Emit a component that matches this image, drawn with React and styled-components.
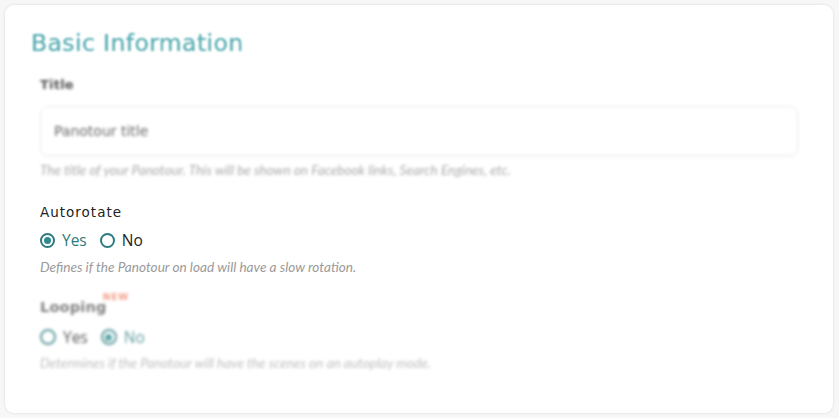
import React from "react";
import styled, { createGlobalStyle } from "styled-components";

const Global = createGlobalStyle`
  html, body { margin: 0; padding: 0; background: #f7f7f7; }
  * { box-sizing: border-box; }
`;

const Page = styled.div`
  width: 839px;
  height: 418px;
  padding: 5px 6px 5px 5px;
`;

const Card = styled.section`
  height: 408px;
  background: #fff;
  border-radius: 9px;
  box-shadow: 0 0 3px rgba(0, 0, 0, 0.12);
  padding: 24px 35px 0 26px;
  display: flex;
  flex-direction: column;
`;

const Heading = styled.h2`
  margin: 0;
  font-family: "DejaVu Sans", sans-serif;
  font-weight: 400;
  font-size: 23.5px;
  line-height: 28px;
  color: #5aaeb3;
  letter-spacing: 0.4px;
  filter: blur(1.3px);
  text-shadow: 0 0 0.6px #5aaeb3;
`;

const Body = styled.div`
  padding-left: 9px;
  display: flex;
  flex-direction: column;
`;

const Group = styled.div`
  display: flex;
  flex-direction: column;
  margin-top: ${(p) => p.$top}px;
  filter: ${(p) => (p.$blur ? "blur(1.4px)" : "none")};
  opacity: ${(p) => (p.$faded ? 0.75 : 1)};
`;

const Label = styled.div`
  position: relative;
  align-self: flex-start;
  font-family: "DejaVu Sans", sans-serif;
  font-size: ${(p) => p.$size}px;
  font-weight: ${(p) => (p.$bold ? 700 : 400)};
  letter-spacing: ${(p) => (p.$bold ? 0.2 : 1)}px;
  color: ${(p) => (p.$bold ? "#555" : "#222")};
  line-height: 18px;
`;

const NewBadge = styled.span`
  position: absolute;
  left: 100%;
  top: -10px;
  margin-left: -4px;
  font-family: "DejaVu Sans", sans-serif;
  font-weight: 700;
  font-size: 9px;
  color: #f07b5f;
  letter-spacing: 1px;
`;

const Input = styled.div`
  margin-top: 12px;
  height: 50px;
  border: 1px solid #ececec;
  border-radius: 8px;
  display: flex;
  align-items: center;
  padding-left: 13px;
  font-family: "DejaVu Sans", sans-serif;
  font-size: 14px;
  color: #666;
  box-shadow: 0 1px 2px rgba(0, 0, 0, 0.04);
`;

const Help = styled.div`
  margin-top: ${(p) => p.$top}px;
  font-family: Lato, "Liberation Sans", sans-serif;
  font-style: italic;
  font-size: 13.6px;
  color: ${(p) => p.$color || "#9a9a9a"};
  line-height: 16px;
`;

const Radios = styled.div`
  display: flex;
  align-items: center;
  gap: 13px;
  margin-top: ${(p) => p.$top}px;
`;

const Option = styled.label`
  display: flex;
  align-items: center;
  gap: 7px;
  font-family: "Open Sans", sans-serif;
  font-size: 15.5px;
  color: ${(p) => (p.$checked ? "#2d7b7e" : "#222")};
  line-height: 18px;
`;

const Circle = styled.span`
  width: ${(p) => p.$size}px;
  height: ${(p) => p.$size}px;
  border-radius: 50%;
  border: 2px solid #2d7b7e;
  display: flex;
  align-items: center;
  justify-content: center;
  &::after {
    content: "";
    width: 7px;
    height: 7px;
    border-radius: 50%;
    background: #2d8a8e;
    display: ${(p) => (p.$checked ? "block" : "none")};
  }
`;

const Radio = ({ checked, size = 15, children }) => (
  <Option $checked={checked}>
    <Circle $checked={checked} $size={size} />
    {children}
  </Option>
);

export default function App() {
  return (
    <>
      <Global />
      <Page>
        <Card>
          <Heading>Basic Information</Heading>
          <Body>
            <Group $top={19} $blur>
              <Label $bold $size={13}>Title</Label>
              <Input>Panotour title</Input>
              <Help $top={6} $color="#aaa">
                The title of your Panotour. This will be shown on Facebook links, Search Engines, etc.
              </Help>
            </Group>
            <Group $top={25}>
              <Label $size={13.5}>Autorotate</Label>
              <Radios $top={10}>
                <Radio checked>Yes</Radio>
                <Radio>No</Radio>
              </Radios>
              <Help $top={10}>Defines if the Panotour on load will have a slow rotation.</Help>
            </Group>
            <Group $top={23} $blur $faded>
              <Label $bold $size={14.5}>
                Looping
                <NewBadge>NEW</NewBadge>
              </Label>
              <Radios $top={12}>
                <Radio size={16}>Yes</Radio>
                <Radio checked size={16}>No</Radio>
              </Radios>
              <Help $top={9} $color="#aaa">
                Determines if the Panotour will have the scenes on an autoplay mode.
              </Help>
            </Group>
          </Body>
        </Card>
      </Page>
    </>
  );
}
